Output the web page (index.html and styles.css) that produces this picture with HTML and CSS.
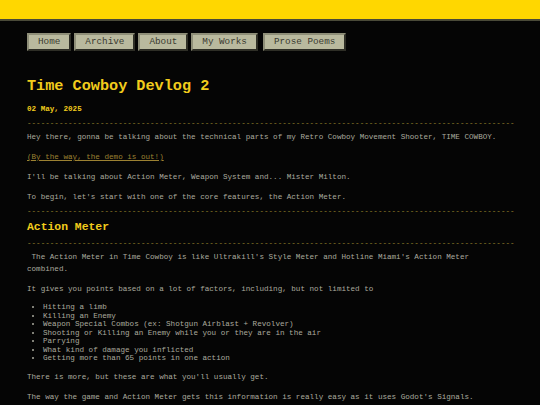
FILE: index.html
```html
<!DOCTYPE html>
<html>
<head>
<meta charset="utf-8">
<link rel="stylesheet" href="styles.css">
</head>
<body>
<div class="topbar"></div>
<div class="page">
  <nav class="nav">
    <a class="btn">Home</a>
    <a class="btn">Archive</a>
    <a class="btn">About</a>
    <a class="btn">My Works</a>
    <a class="btn btn-sep">Prose Poems</a>
  </nav>
  <h1 class="title">Time Cowboy Devlog 2</h1>
  <div class="date">02 May, 2025</div>
  <div class="rule">-----------------------------------------------------------------------------------------------------------</div>
  <p class="para">Hey there, gonna be talking about the technical parts of my Retro Cowboy Movement Shooter, TIME COWBOY.</p>
  <p class="para"><a class="link">(By the way, the demo is out!)</a></p>
  <p class="para">I'll be talking about Action Meter, Weapon System and... Mister Milton.</p>
  <p class="para">To begin, let's start with one of the core features, the Action Meter.</p>
  <div class="rule">-----------------------------------------------------------------------------------------------------------</div>
  <h2 class="heading">Action Meter</h2>
  <div class="rule">-----------------------------------------------------------------------------------------------------------</div>
  <p class="para">&nbsp;The Action Meter in Time Cowboy is like Ultrakill's Style Meter and Hotline Miami's Action Meter combined.</p>
  <p class="para">It gives you points based on a lot of factors, including, but not limited to</p>
  <ul class="list">
    <li>Hitting a limb</li>
    <li>Killing an Enemy</li>
    <li>Weapon Special Combos (ex: Shotgun Airblast + Revolver)</li>
    <li>Shooting or Killing an Enemy while you or they are in the air</li>
    <li>Parrying</li>
    <li>What kind of damage you inflicted</li>
    <li>Getting more than 65 points in one action</li>
  </ul>
  <p class="para">There is more, but these are what you'll usually get.</p>
  <p class="para">The way the game and Action Meter gets this information is really easy as it uses Godot's Signals.</p>
</div>
</body>
</html>
```
FILE: styles.css
```css
html, body {
  margin: 0;
  padding: 0;
  background: #050505;
  overflow: hidden;
}
body {
  font-family: "Liberation Mono", "Courier New", monospace;
  color: #aaaa9e;
}
.topbar {
  height: 19px;
  background: #ffd700;
  border-bottom: 2px solid #4a4a38;
}
.page {
  padding: 12px 27px 0 27px;
}
.nav {
  display: flex;
  gap: 3px;
}
.btn {
  display: block;
  font-size: 9.3px;
  line-height: 14px;
  padding: 0 9px;
  background: #b9b99e;
  color: #3a3a30;
  border: 2px solid;
  border-color: #8e8e78 #2e2e26 #2e2e26 #8e8e78;
}
.btn-sep {
  margin-left: 2px;
}
.title {
  font-size: 15.2px;
  font-weight: bold;
  color: #f2cc1c;
  margin: 26px 0 0 0;
  line-height: 18px;
}
.date {
  font-size: 7.6px;
  font-weight: bold;
  color: #f2cc1c;
  margin-top: 9px;
  line-height: 10px;
}
.rule {
  font-size: 7.6px;
  line-height: 8px;
  color: #9a852e;
  white-space: nowrap;
  margin: -4px 0;
}
.date + .rule {
  margin-top: 5px;
}
.para {
  font-size: 7.6px;
  line-height: 12px;
  margin: 8px 0;
}
.link {
  color: #9c8232;
  text-decoration: underline;
}
.heading {
  font-size: 11.4px;
  font-weight: bold;
  color: #f2cc1c;
  margin: 8px 0;
  line-height: 16px;
}
.list {
  font-size: 7.6px;
  line-height: 8.5px;
  margin: 8px 0 7px 0;
  padding-left: 16px;
  color: #aaaa9e;
}
```
